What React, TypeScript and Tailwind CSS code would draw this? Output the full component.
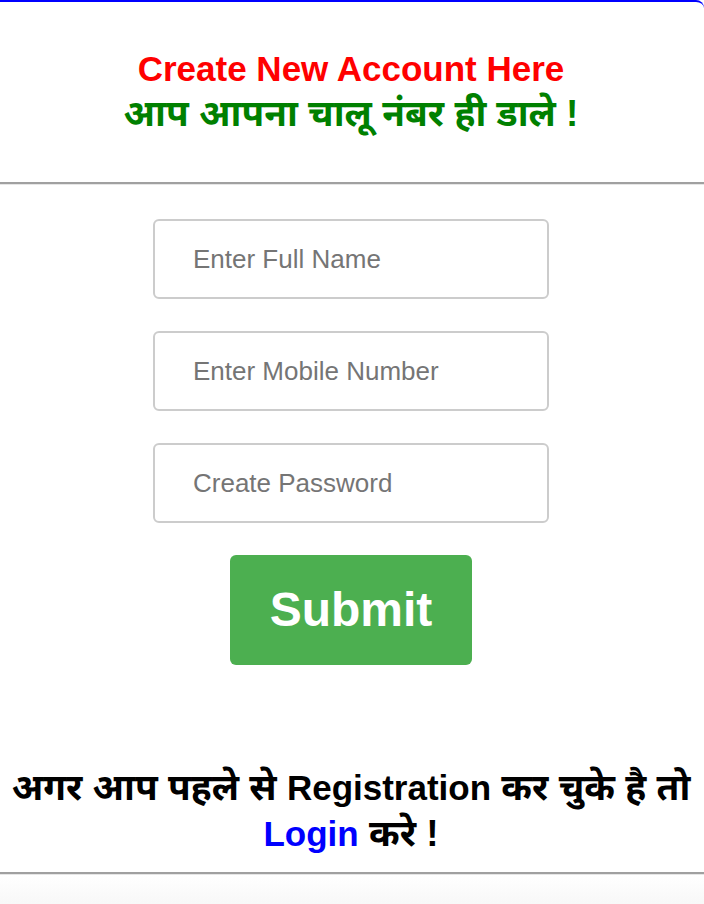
import React from "react";

export default function App() {
  const font = { fontFamily: '"Liberation Sans", Arial, "Noto Sans", sans-serif' };
  const inputCls =
    "w-[396px] h-[80px] border-2 border-[#cccccc] rounded-md pl-[38px] pr-[20px] text-[26px] text-[#333] placeholder:text-[#757575] outline-none";
  return (
    <div className="min-h-screen w-[704px] bg-white" style={font}>
      <div className="border-t-2 border-[#0000ff] rounded-tr-lg bg-white">
        <div className="pt-[44px] pb-[46px] pr-[2px] text-center font-bold">
          <div className="text-[35px] leading-[45px] text-[#ff0000]">Create New Account Here</div>
          <div className="text-[37px] leading-[45px] text-[#008000]">आप आपना चालू नंबर ही डाले !</div>
        </div>
        <div className="border-t-2 border-[#a0a0a0] border-b border-b-[#e6e6e6]" />
        <form
          className="flex flex-col items-center gap-[32px] pt-[34px] pr-[2px]"
          onSubmit={(e) => e.preventDefault()}
        >
          <input type="text" placeholder="Enter Full Name" className={inputCls} />
          <input type="text" placeholder="Enter Mobile Number" className={inputCls} />
          <input type="password" placeholder="Create Password" className={inputCls} />
          <button
            type="submit"
            className="w-[242px] h-[110px] bg-[#4caf50] rounded-md text-white text-[48px] font-bold"
          >
            Submit
          </button>
        </form>
        <div className="pt-[100px] pb-[15px] pr-[2px] text-center font-bold text-[37px] leading-[46px] text-black">
          <div>
            अगर आप पहले से <span className="text-[35px]">Registration</span> कर चुके है तो
          </div>
          <div>
            <a href="#" className="text-[#0000ff] text-[35px]">Login</a> करे !
          </div>
        </div>
        <div className="border-t-2 border-[#a0a0a0] border-b border-b-[#e6e6e6]" />
      </div>
      <div className="h-[40px] bg-gradient-to-b from-white to-[#f5f5f5]" />
    </div>
  );
}
